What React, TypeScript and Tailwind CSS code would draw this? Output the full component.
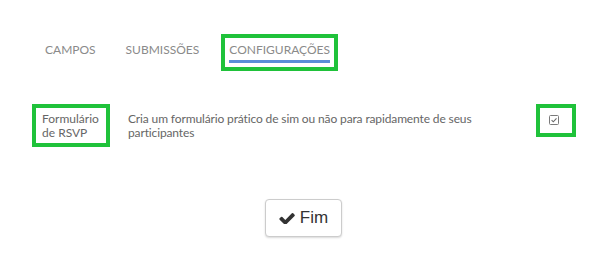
import React from 'react';

const tabs = ['CAMPOS', 'SUBMISSÕES', 'CONFIGURAÇÕES'];

const CheckIcon: React.FC = () => (
  <svg viewBox="99 330 1572 1100" className="w-[16px] h-[11px]" fill="#333333">
    <path d="M1671 566q0 40-28 68l-724 724-136 136q-28 28-68 28t-68-28l-136-136-362-362q-28-28-28-68t28-68l136-136q28-28 68-28t68 28l294 295 656-657q28-28 68-28t68 28l136 136q28 28 28 68z" />
  </svg>
);

const CheckSquare: React.FC = () => (
  <svg viewBox="0 0 10 10" className="w-[10px] h-[10px]">
    <rect x="0.5" y="0.5" width="9" height="9" rx="1" fill="none" stroke="#7a7a7a" strokeWidth="1" />
    <path d="M2.6 5.1l1.7 1.7 3.2-3.4" fill="none" stroke="#6a6a6a" strokeWidth="1.1" />
  </svg>
);

export default function App() {
  const active = 2;

  return (
    <div className="w-[596px] h-[259px] bg-white pl-[30px] pr-[19px] pt-[38px] font-['Lato',sans-serif] text-[12px]">
      {/* Tabs */}
      <div className="flex gap-[22px] pl-[11px]">
        {tabs.map((t, i) => (
          <div
            key={t}
            className={
              'px-[4px] pt-[2px] pb-[4px] ' +
              (i === active ? 'outline-[4px] outline-solid outline-[#1fc23a]' : '')
            }
          >
            <div
              className={
                'h-[23px] leading-[20px] text-[#8a8a8a] border-b-[3px] ' +
                (i === active ? 'border-[#5b8ed8]' : 'border-transparent')
              }
            >
              {t}
            </div>
          </div>
        ))}
      </div>

      {/* Setting row */}
      <div className="flex items-start mt-[41px]">
        <div className="ml-[6px] w-[70px] pl-[6px] pt-[4px] pb-[3px] leading-[14px] text-[#666666] outline-[4px] outline-solid outline-[#1fc23a]">
          Formulário de RSVP
        </div>
        <div className="ml-[22px] w-[360px] pt-[4px] leading-[14px] tracking-[-0.13px] text-[#666666]">
          Cria um formulário prático de sim ou não para rapidamente de seus participantes
        </div>
        <div className="ml-auto mr-[5px] w-[32px] h-[25px] pl-[9px] pt-[7px] outline-[4px] outline-solid outline-[#1fc23a]">
          <CheckSquare />
        </div>
      </div>

      {/* Finish button */}
      <div className="flex justify-center mt-[56px]">
        <button className="flex items-center gap-[5px] w-[77px] h-[38px] justify-center rounded-[4px] border border-[#cccccc] bg-white shadow-[0_1px_2px_rgba(0,0,0,0.15)] font-['Liberation_Sans',sans-serif] text-[17px] text-[#333333]">
          <CheckIcon />
          <span>Fim</span>
        </button>
      </div>
    </div>
  );
}
